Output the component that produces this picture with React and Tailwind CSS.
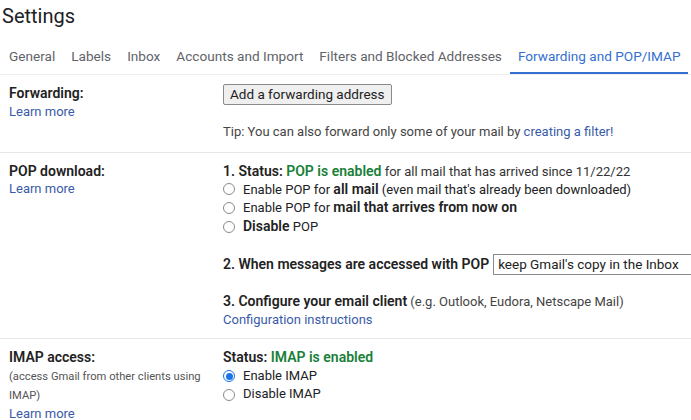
import React from "react";

const Radio = ({ checked }) =>
  checked ? (
    <span className="inline-flex w-[12px] h-[12px] rounded-full border border-[#1a73e8] items-center justify-center shrink-0">
      <span className="w-[7px] h-[7px] rounded-full bg-[#1a73e8]" />
    </span>
  ) : (
    <span className="inline-block w-[12px] h-[12px] rounded-full border border-[#8a8a8a] bg-white shrink-0" />
  );

const RadioRow = ({ checked, children }) => (
  <div className="flex items-center h-[18.6px] whitespace-nowrap">
    <span className="w-[20px] flex items-center">
      <Radio checked={checked} />
    </span>
    <span>{children}</span>
  </div>
);

const B = ({ children, className = "" }) => (
  <span className={"font-semibold text-[14px] text-[#222] " + className}>{children}</span>
);

export default function App() {
  const tabs = [
    "General",
    "Labels",
    "Inbox",
    "Accounts and Import",
    "Filters and Blocked Addresses",
    "Forwarding and POP/IMAP",
    "Add-ons",
  ];
  return (
    <div
      className="w-[691px] h-[420px] overflow-hidden bg-white text-[#202124]"
      style={{ fontFamily: "Roboto, 'Liberation Sans', sans-serif" }}
    >
      <div className="h-[36px] pl-[2px] pt-[1px] text-[20px] leading-[30px] text-[#202124]">Settings</div>
      <div className="flex whitespace-nowrap border-b border-[#ececec] h-[39px] pl-[1px] text-[13.6px] text-[#5f6368]">
        {tabs.map((t) => (
          <div
            key={t}
            className={
              t === "Forwarding and POP/IMAP"
                ? "px-2 pt-[10px] border-b-[2px] border-[#3470cf] text-[#3470cf]"
                : "px-2 pt-[10px]"
            }
          >
            {t}
          </div>
        ))}
      </div>

      <div className="text-[13px] leading-[18.6px]">
        {/* Forwarding */}
        <div className="flex border-b border-[#e6e6e6] pt-[9px] pb-[10px]">
          <div className="w-[223px] pl-[9px]">
            <div className="h-[18.6px]"><B>Forwarding:</B></div>
            <div className="h-[18.6px] text-[#3a5ba9]">Learn more</div>
          </div>
          <div className="flex-1">
            <button className="h-[21px] px-[6px] border border-[#8a8a8a] rounded-[2px] bg-[#efefef] text-[13.5px] leading-[19px] text-[#222]">
              Add a forwarding address
            </button>
            <div className="mt-[18px] h-[18.6px] text-[#444]">
              Tip: You can also forward only some of your mail by{" "}
              <span className="text-[#3a5ba9]">creating a filter!</span>
            </div>
          </div>
        </div>

        {/* POP */}
        <div className="flex border-b border-[#e6e6e6] pt-[9px] pb-[9px]">
          <div className="w-[223px] pl-[9px]">
            <div className="h-[18.6px]"><B>POP download:</B></div>
            <div className="h-[18.6px] text-[#3a5ba9]">Learn more</div>
          </div>
          <div className="flex-1 min-w-0">
            <div className="h-[18.6px] whitespace-nowrap">
              <B>1. Status: </B>
              <B className="!text-[#188038]">POP is enabled</B>
              <span className="text-[#333]"> for all mail that has arrived since 11/22/22</span>
            </div>
            <RadioRow>
              Enable POP for <B>all mail</B> (even mail that's already been downloaded)
            </RadioRow>
            <RadioRow>
              Enable POP for <B>mail that arrives from now on</B>
            </RadioRow>
            <RadioRow>
              <B>Disable</B> POP
            </RadioRow>
            <div className="flex items-center h-[21px] mt-[18px] whitespace-nowrap">
              <B>2. When messages are accessed with POP</B>
              <div className="ml-[4px] h-[21px] w-[240px] shrink-0 border border-[#8a8a8a] px-[4px] text-[13.5px] leading-[19px] text-[#222]">
                keep Gmail's copy in the Inbox
              </div>
            </div>
            <div className="mt-[17px] h-[18.6px] whitespace-nowrap">
              <B>3. Configure your email client</B>
              <span className="text-[#444]"> (e.g. Outlook, Eudora, Netscape Mail)</span>
            </div>
            <div className="h-[18.6px] text-[#3a5ba9]">Configuration instructions</div>
          </div>
        </div>

        {/* IMAP */}
        <div className="flex pt-[9px]">
          <div className="w-[223px] pl-[9px]">
            <div className="h-[18.6px]"><B>IMAP access:</B></div>
            <div className="h-[19px] leading-[19px] text-[11.2px] text-[#555]">(access Gmail from other clients using</div>
            <div className="h-[19px] leading-[19px] text-[11.2px] text-[#555]">IMAP)</div>
            <div className="h-[18.6px] text-[#3a5ba9]">Learn more</div>
          </div>
          <div className="flex-1">
            <div className="h-[18.6px]">
              <B>Status: </B>
              <B className="!text-[#188038]">IMAP is enabled</B>
            </div>
            <RadioRow checked>Enable IMAP</RadioRow>
            <RadioRow>Disable IMAP</RadioRow>
          </div>
        </div>
      </div>
    </div>
  );
}
